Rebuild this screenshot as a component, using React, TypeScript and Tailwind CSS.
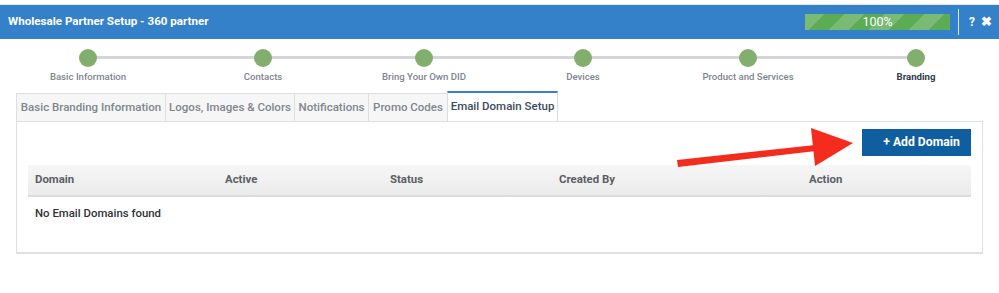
const steps = [
  { label: 'Basic Information', ml: 'ml-[18px]' },
  { label: 'Contacts', ml: 'ml-[35px]' },
  { label: 'Bring Your Own DID', ml: 'ml-[21px]' },
  { label: 'Devices', ml: 'ml-[19px]' },
  { label: 'Product and Services', ml: 'ml-[25px]' },
  { label: 'Branding', ml: 'ml-[28px]', current: true },
];

const tabs = [
  { label: 'Basic Branding Information', w: 'w-[150px]' },
  { label: 'Logos, Images & Colors', w: 'w-[130px]' },
  { label: 'Notifications', w: 'w-[75px]' },
  { label: 'Promo Codes', w: 'w-[80px]' },
  { label: 'Email Domain Setup', w: 'w-[111px]', active: true },
];

const columns = ['Domain', 'Active', 'Status', 'Created By', 'Action'];

export default function App() {
  return (
    <div className="relative w-[999px] h-[293px] bg-white overflow-hidden font-['Roboto',sans-serif]">
      <div className="h-[5px] border-b border-[#e3e6ea]" />

      {/* title bar */}
      <div className="h-[34px] bg-[#3480c9] flex items-center pl-[8px] pr-[7px]">
        <h1 className="text-white text-[11.6px] font-bold flex-1">Wholesale Partner Setup - 360 partner</h1>
        <div className="w-[145px] h-[16px] ml-[2px] bg-[#5cab55] bg-[linear-gradient(135deg,rgba(255,255,255,.18)_25%,transparent_25%,transparent_50%,rgba(255,255,255,.18)_50%,rgba(255,255,255,.18)_75%,transparent_75%,transparent)] bg-[length:40px_40px] flex items-center justify-center text-white text-[12.5px]">
          100%
        </div>
        <div className="w-px h-[26px] bg-[#d6e4f3] ml-[8px] mr-[10px]" />
        <span className="text-white text-[12px] font-bold">?</span>
        <span className="text-white text-[13px] font-bold ml-[6px]">✖</span>
      </div>

      {/* wizard steps */}
      <div className="relative flex h-[50px] pt-[10px]">
        <div className="absolute left-[88px] w-[828px] top-[17px] h-[3px] bg-[#d3d5da]" />
        {steps.map((s) => (
          <div key={s.label} className={`relative w-[140px] flex flex-col items-center ${s.ml}`}>
            <div className="w-[18px] h-[18px] rounded-full bg-[#83af6e]" />
            <div className={`mt-[3px] text-[9.6px] whitespace-nowrap ${s.current ? 'text-[#2f3b4c] font-bold' : 'text-[#7d8590] font-medium'}`}>{s.label}</div>
          </div>
        ))}
      </div>

      {/* tabs */}
      <div className="flex ml-[16px] mt-[4px] h-[28px] items-end">
        {tabs.map((t) => (
          <div
            key={t.label}
            className={`${t.w} h-[28px] flex items-center justify-center whitespace-nowrap text-[11.5px] font-medium border-l border-r -mr-px ${
              t.active
                ? 'bg-white text-[#3d4b5c] border-[#d7dde3] border-t-2 border-t-[#3480c9] relative z-10 h-[30px]'
                : 'bg-[#f6f6f6] text-[#80868e] border-[#dcdfe3] border-t'
            }`}
          >
            {t.label}
          </div>
        ))}
      </div>

      {/* panel */}
      <div className="ml-[16px] w-[967px] h-[133px] border border-[#dde1e6] border-b-2 px-[11px] pt-[7px]">
        <div className="flex justify-end">
          <button className="w-[109px] h-[27px] pl-[10px] bg-[#0f5e9f] text-white text-[12.2px] font-bold">+ Add Domain</button>
        </div>
        <div className="mt-[9px] grid grid-cols-[190px_165px_169px_250px_169px] h-[32px] items-center bg-[linear-gradient(#f6f6f6,#ebebeb)] border-b-2 border-[#dcdcdc] text-[11.4px] font-bold text-[#5b5f64]">
          {columns.map((c) => (
            <div key={c} className="pl-[7px]">{c}</div>
          ))}
        </div>
        <div className="pl-[7px] pt-[8px] text-[11.4px] font-medium text-[#2e3236]">No Email Domains found</div>
      </div>

      {/* annotation arrow */}
      <svg className="absolute left-0 top-0 pointer-events-none" width="999" height="293">
        <polygon points="677,160 815,145 816,151 678,167" fill="#f42c1d" />
        <polygon points="811,128 853,143 815,166" fill="#f42c1d" />
      </svg>
    </div>
  );
}
